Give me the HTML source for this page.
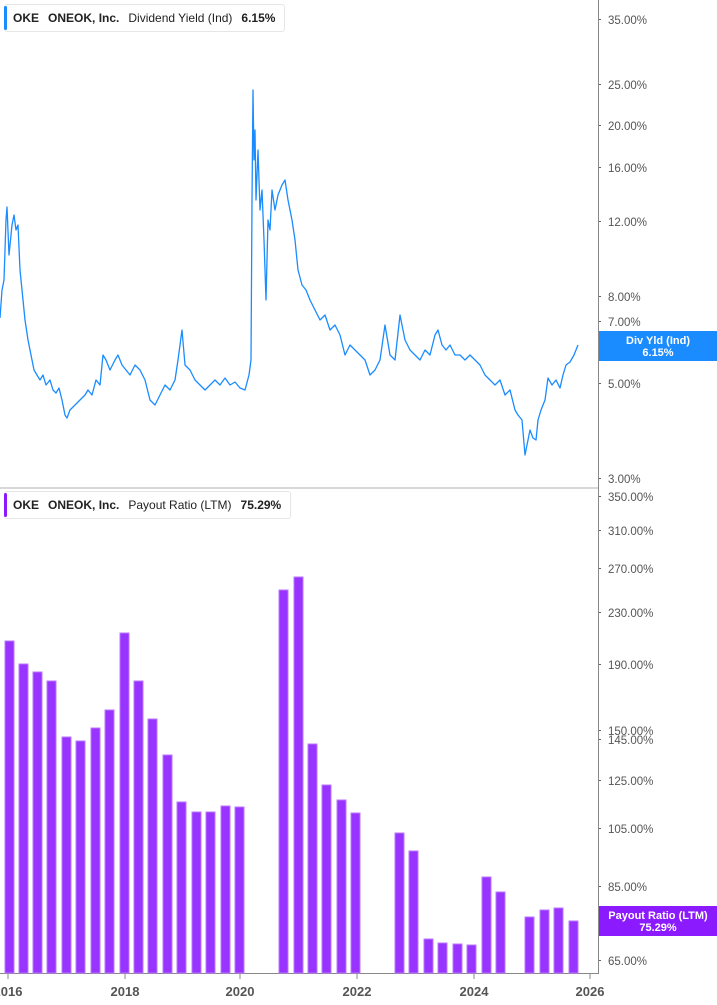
<!DOCTYPE html>
<html><head><meta charset="utf-8"><style>
html,body{margin:0;padding:0;background:#fff;width:717px;height:1005px;overflow:hidden;font-family:"Liberation Sans",Arial,sans-serif}
.leg{position:absolute;left:4px;height:26px;background:#fff;border:1px solid #e6e6e6;border-radius:3px;font-size:12px;color:#222;line-height:26px;padding-left:8px;padding-right:9px;white-space:nowrap}
.leg:before{content:"";position:absolute;left:-1px;top:1px;bottom:1px;width:3px;border-radius:2px}
.l1{top:4px}.l1:before{background:#1a8cff}
.l2{top:491px}.l2:before{background:#8c1aff}
.leg b{font-weight:bold;margin-right:9px}
</style></head><body>
<svg width="717" height="1005" style="position:absolute;left:0;top:0" font-family="Liberation Sans, Arial, sans-serif">
<line x1="0" y1="488" x2="598" y2="488" stroke="#d8d8d8" stroke-width="2"/>
<line x1="598.5" y1="0" x2="598.5" y2="974" stroke="#888" stroke-width="1"/>
<line x1="0" y1="973.5" x2="598" y2="973.5" stroke="#888" stroke-width="1"/>
<g fill="#555" font-size="11.5">
<text x="608" y="24">35.00%</text><text x="608" y="89">25.00%</text><text x="608" y="130">20.00%</text>
<text x="608" y="172">16.00%</text><text x="608" y="226">12.00%</text><text x="608" y="301">8.00%</text>
<text x="608" y="326">7.00%</text><text x="608" y="388">5.00%</text><text x="608" y="483">3.00%</text>
<text x="608" y="501">350.00%</text><text x="608" y="535">310.00%</text><text x="608" y="573">270.00%</text>
<text x="608" y="617">230.00%</text><text x="608" y="669">190.00%</text><text x="608" y="735">150.00%</text>
<text x="608" y="744">145.00%</text><text x="608" y="785">125.00%</text><text x="608" y="833">105.00%</text>
<text x="608" y="891">85.00%</text><text x="608" y="965">65.00%</text>
</g>
<g fill="#666"><rect x="599" y="19" width="2" height="1"/><rect x="599" y="84" width="2" height="1"/><rect x="599" y="125" width="2" height="1"/><rect x="599" y="167" width="2" height="1"/><rect x="599" y="221" width="2" height="1"/><rect x="599" y="296" width="2" height="1"/><rect x="599" y="321" width="2" height="1"/><rect x="599" y="383" width="2" height="1"/><rect x="599" y="478" width="2" height="1"/><rect x="599" y="496" width="2" height="1"/><rect x="599" y="530" width="2" height="1"/><rect x="599" y="568" width="2" height="1"/><rect x="599" y="612" width="2" height="1"/><rect x="599" y="664" width="2" height="1"/><rect x="599" y="730" width="2" height="1"/><rect x="599" y="739" width="2" height="1"/><rect x="599" y="780" width="2" height="1"/><rect x="599" y="828" width="2" height="1"/><rect x="599" y="886" width="2" height="1"/><rect x="599" y="960" width="2" height="1"/></g>
<g fill="#555" font-size="13" font-weight="bold" text-anchor="middle">
<text x="8" y="996">2016</text><text x="125" y="996">2018</text><text x="240" y="996">2020</text>
<text x="357" y="996">2022</text><text x="474" y="996">2024</text><text x="590" y="996">2026</text>
</g>
<g stroke="#888"><line x1="8" y1="974" x2="8" y2="979"/><line x1="125" y1="974" x2="125" y2="979"/><line x1="240" y1="974" x2="240" y2="979"/><line x1="357" y1="974" x2="357" y2="979"/><line x1="474" y1="974" x2="474" y2="979"/><line x1="590" y1="974" x2="590" y2="979"/></g>
<polyline fill="none" stroke="#1a8cff" stroke-width="1.3" stroke-linejoin="round" points="0,318 2,290 4,280 6,220 7,207 9,255 12,225 14,215 16,230 18,225 20,270 22,290 25,320 28,340 31,355 34,370 37,375 40,380 43,375 46,385 50,380 53,390 56,393 59,388 62,400 65,415 67,418 70,410 75,405 80,400 85,395 88,390 92,395 96,380 100,385 103,355 106,360 110,370 115,360 118,355 122,365 126,370 130,375 135,365 140,370 145,380 150,400 155,405 160,395 165,385 170,390 175,380 178,360 182,330 185,365 190,370 195,380 200,385 205,390 210,385 215,380 220,385 225,378 230,385 235,382 240,388 245,390 249,375 251,360 252,200 253,90 254,160 255,130 256,200 258,150 260,210 262,190 264,240 266,300 268,220 270,230 272,190 275,210 278,195 282,185 285,180 288,200 292,220 295,240 298,270 302,285 306,290 310,300 315,310 320,320 325,315 330,330 335,325 340,335 345,355 350,345 355,350 360,355 365,360 370,375 375,370 380,360 385,325 390,355 395,360 400,315 405,340 410,350 415,355 420,360 425,350 430,355 435,335 438,330 442,345 446,350 450,345 455,355 460,355 465,360 470,355 475,360 480,365 485,375 490,380 495,385 500,380 505,395 510,390 515,410 518,415 522,420 525,455 527,445 530,430 533,438 536,440 538,420 541,410 545,400 548,378 552,385 556,380 560,388 563,375 566,365 570,362 574,355 578,345"/>
<g fill="#9933ff" stroke="#b877ff" stroke-width="1">
<rect x="5" y="641" width="9" height="332"/><rect x="19" y="664" width="9" height="309"/><rect x="33" y="672" width="9" height="301"/><rect x="47" y="681" width="9" height="292"/><rect x="62" y="737" width="9" height="236"/><rect x="76" y="741" width="9" height="232"/><rect x="91" y="728" width="9" height="245"/><rect x="105" y="710" width="9" height="263"/><rect x="120" y="633" width="9" height="340"/><rect x="134" y="681" width="9" height="292"/><rect x="148" y="719" width="9" height="254"/><rect x="163" y="755" width="9" height="218"/><rect x="177" y="802" width="9" height="171"/><rect x="192" y="812" width="9" height="161"/><rect x="206" y="812" width="9" height="161"/><rect x="221" y="806" width="9" height="167"/><rect x="235" y="807" width="9" height="166"/>
<rect x="279" y="590" width="9" height="383"/><rect x="294" y="577" width="9" height="396"/><rect x="308" y="744" width="9" height="229"/><rect x="322" y="785" width="9" height="188"/><rect x="337" y="800" width="9" height="173"/><rect x="351" y="813" width="9" height="160"/>
<rect x="395" y="833" width="9" height="140"/><rect x="409" y="851" width="9" height="122"/><rect x="424" y="939" width="9" height="34"/><rect x="438" y="943" width="9" height="30"/><rect x="453" y="944" width="9" height="29"/><rect x="467" y="945" width="9" height="28"/><rect x="482" y="877" width="9" height="96"/><rect x="496" y="892" width="9" height="81"/>
<rect x="525" y="917" width="9" height="56"/><rect x="540" y="910" width="9" height="63"/><rect x="554" y="908" width="9" height="65"/><rect x="569" y="921" width="9" height="52"/>
</g>
<rect x="599" y="331" width="118" height="30" fill="#1a8cff"/>
<text x="658" y="344" fill="#fff" font-size="11" font-weight="bold" text-anchor="middle">Div Yld (Ind)</text>
<text x="658" y="356" fill="#fff" font-size="11" font-weight="bold" text-anchor="middle">6.15%</text>
<rect x="599" y="906" width="118" height="30" fill="#8c1aff"/>
<text x="658" y="919" fill="#fff" font-size="11" font-weight="bold" text-anchor="middle">Payout Ratio (LTM)</text>
<text x="658" y="931" fill="#fff" font-size="11" font-weight="bold" text-anchor="middle">75.29%</text>
</svg>
<div class="leg l1"><b>OKE</b><b>ONEOK, Inc.</b><span style="margin-right:9px">Dividend Yield (Ind)</span><b style="margin:0">6.15%</b></div>
<div class="leg l2"><b>OKE</b><b>ONEOK, Inc.</b><span style="margin-right:9px">Payout Ratio (LTM)</span><b style="margin:0">75.29%</b></div>
</body></html>
